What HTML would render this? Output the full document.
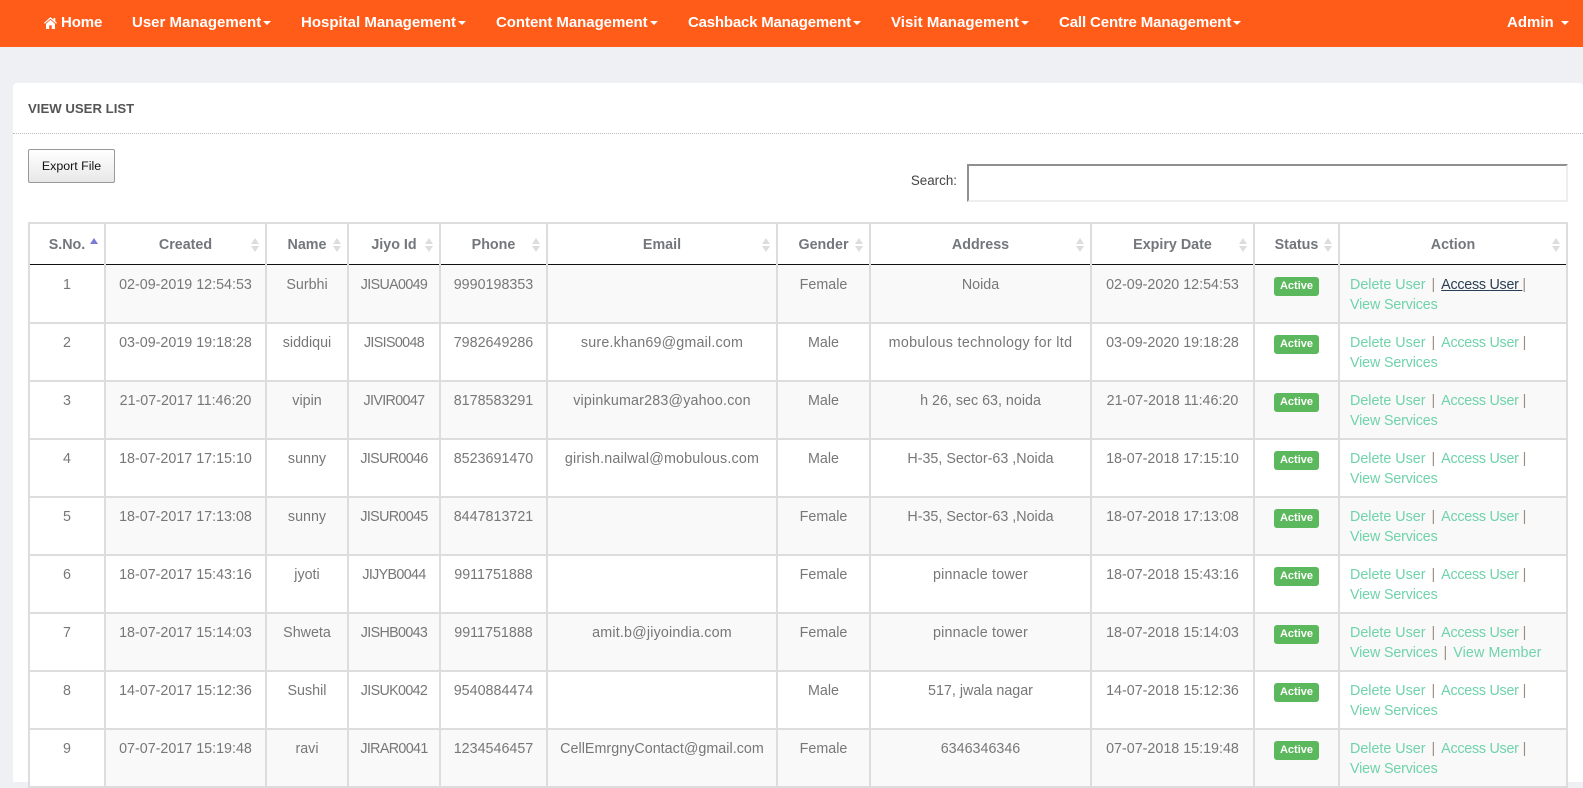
<!DOCTYPE html>
<html><head><meta charset="utf-8"><title>View User List</title>
<style>
*{box-sizing:border-box}
html,body{margin:0;padding:0;width:1583px;height:782px;overflow:hidden;background:#eef0f4;font-family:"Liberation Sans",sans-serif;font-size:14.3px;color:#777}
#nav{position:absolute;left:0;top:0;width:1583px;height:47px;background:#ff5b19}
#nav span{position:absolute;top:14px;line-height:18px;color:#fff;font-weight:bold;font-size:15px;white-space:nowrap}
#nav i{display:inline-block;width:0;height:0;border-left:4px solid transparent;border-right:4px solid transparent;border-top:4px solid #fff;vertical-align:2px;margin-left:2px}
#nav svg{position:absolute;left:44px;top:17px}
#panel{position:absolute;left:13px;top:83px;width:1570px;height:699px;background:#fff;border-radius:4px 4px 0 0}
#hd{position:absolute;left:15px;top:17px;font-weight:bold;font-size:13.2px;color:#555;line-height:18px;white-space:nowrap}
#dot{position:absolute;left:0;top:50px;width:1570px;border-top:1px dotted #bbb}
#btn{position:absolute;left:15px;top:66px;width:87px;height:34px;border:1px solid #999;border-radius:2px;background:linear-gradient(#fff,#e8e8e8);color:#111;font-size:12.4px;line-height:33px;text-align:center}
#sl{position:absolute;right:626px;top:89px;color:#444;font-size:13.4px;line-height:18px}
#si{position:absolute;left:954px;top:81px;width:601px;height:38px;border:2px solid;border-color:#8f8f8f #eee #eee #8f8f8f;background:#fff}
table{position:absolute;left:15px;top:139px;width:1538px;border-collapse:collapse;table-layout:fixed}
th,td{border:2px solid #ddd;text-align:center;vertical-align:top;white-space:nowrap}
th{height:41px;padding:12px 0 0;line-height:18px;font-weight:bold;color:#73777c;position:relative;border-bottom:1px solid #111}
td{height:58px;padding:9px 0 0;line-height:20px;color:#777}
tbody tr:first-child td{border-top:1px solid #111;height:59px;padding-top:10px}
tbody tr:nth-child(odd) td{background:#f9f9f9}
tbody tr:nth-child(odd) td:first-child{background:#fff}
td:nth-child(4){letter-spacing:-.65px}
td:nth-child(6){letter-spacing:.18px}
td:last-child{text-align:left;padding-left:10px;color:#a08c7c}
a{color:#6fd3ab;text-decoration:none}
a.d{margin-right:2px}
a.c{margin:0 0 0 2px;letter-spacing:-.25px}
a.v{letter-spacing:-.15px;margin-right:2px}
a.m{margin-left:2px;letter-spacing:.1px}
a.h{color:#2a3f54;text-decoration:underline}
b.bd{display:inline-block;width:45px;height:19px;margin-top:1px;background:#5cb85c;border-radius:3px;color:#fff;font-size:11px;line-height:19px;text-align:center}
th s{position:absolute;right:6px;top:14px;width:8px;height:14px;display:block}
th s:before,th s:after{content:"";position:absolute;left:0;width:0;height:0;border-left:4px solid transparent;border-right:4px solid transparent}
th s:before{top:0;border-bottom:6px solid #ddd}
th s:after{top:8px;border-top:6px solid #ddd}
th s.a:before{border-bottom-color:#7a7ad8}
th s.a:after{display:none}
</style></head><body>
<div id="nav">
<svg width="13" height="12" viewBox="0 0 13 12"><path fill="#fff" d="M6.5 0 9.5 2.7V1h1.8v3.3L13 5.9l-.8.9L6.5 1.7.8 6.8 0 5.9zM6.5 2.9 11 6.9V12H7.8V8.4H5.2V12H2V6.9z"/></svg>
<span style="left:61px;letter-spacing:-.1px">Home</span>
<span style="left:132px">User Management<i></i></span>
<span style="left:301px">Hospital Management<i></i></span>
<span style="left:496px;letter-spacing:-.05px">Content Management<i></i></span>
<span style="left:688px;letter-spacing:-.2px">Cashback Management<i></i></span>
<span style="left:891px;letter-spacing:.05px">Visit Management<i></i></span>
<span style="left:1059px;letter-spacing:-.13px">Call Centre Management<i></i></span>
<span style="left:1507px">Admin <i style="margin-left:3px"></i></span>
</div>
<div id="panel">
<div id="hd">VIEW USER LIST</div>
<div id="dot"></div>
<div id="btn">Export File</div>
<div id="sl">Search:</div>
<div id="si"></div>
<table>
<colgroup><col style="width:76px"><col style="width:161px"><col style="width:82px"><col style="width:92px"><col style="width:107px"><col style="width:230px"><col style="width:93px"><col style="width:221px"><col style="width:163px"><col style="width:85px"><col style="width:228px"></colgroup>
<thead><tr>
<th>S.No.<s class="a"></s></th><th>Created<s></s></th><th>Name<s></s></th><th>Jiyo Id<s></s></th><th>Phone<s></s></th><th>Email<s></s></th><th>Gender<s></s></th><th>Address<s></s></th><th>Expiry Date<s></s></th><th>Status<s></s></th><th>Action<s></s></th>
</tr></thead>
<tbody>
<tr><td>1</td><td>02-09-2019 12:54:53</td><td>Surbhi</td><td>JISUA0049</td><td>9990198353</td><td></td><td>Female</td><td>Noida</td><td>02-09-2020 12:54:53</td><td><b class="bd">Active</b></td><td><a class="d">Delete User</a> | <a class="c h">Access User </a> |<br><a class="v">View Services</a></td></tr>
<tr><td>2</td><td>03-09-2019 19:18:28</td><td>siddiqui</td><td>JISIS0048</td><td>7982649286</td><td>sure.khan69@gmail.com</td><td>Male</td><td style="letter-spacing:.33px">mobulous technology for ltd</td><td>03-09-2020 19:18:28</td><td><b class="bd">Active</b></td><td><a class="d">Delete User</a> | <a class="c">Access User</a> |<br><a class="v">View Services</a></td></tr>
<tr><td>3</td><td>21-07-2017 11:46:20</td><td>vipin</td><td>JIVIR0047</td><td>8178583291</td><td>vipinkumar283@yahoo.con</td><td>Male</td><td>h 26, sec 63, noida</td><td>21-07-2018 11:46:20</td><td><b class="bd">Active</b></td><td><a class="d">Delete User</a> | <a class="c">Access User</a> |<br><a class="v">View Services</a></td></tr>
<tr><td>4</td><td>18-07-2017 17:15:10</td><td>sunny</td><td>JISUR0046</td><td>8523691470</td><td>girish.nailwal@mobulous.com</td><td>Male</td><td>H-35, Sector-63 ,Noida</td><td>18-07-2018 17:15:10</td><td><b class="bd">Active</b></td><td><a class="d">Delete User</a> | <a class="c">Access User</a> |<br><a class="v">View Services</a></td></tr>
<tr><td>5</td><td>18-07-2017 17:13:08</td><td>sunny</td><td>JISUR0045</td><td>8447813721</td><td></td><td>Female</td><td>H-35, Sector-63 ,Noida</td><td>18-07-2018 17:13:08</td><td><b class="bd">Active</b></td><td><a class="d">Delete User</a> | <a class="c">Access User</a> |<br><a class="v">View Services</a></td></tr>
<tr><td>6</td><td>18-07-2017 15:43:16</td><td>jyoti</td><td>JIJYB0044</td><td>9911751888</td><td></td><td>Female</td><td style="letter-spacing:.2px">pinnacle tower</td><td>18-07-2018 15:43:16</td><td><b class="bd">Active</b></td><td><a class="d">Delete User</a> | <a class="c">Access User</a> |<br><a class="v">View Services</a></td></tr>
<tr><td>7</td><td>18-07-2017 15:14:03</td><td>Shweta</td><td>JISHB0043</td><td>9911751888</td><td>amit.b@jiyoindia.com</td><td>Female</td><td style="letter-spacing:.2px">pinnacle tower</td><td>18-07-2018 15:14:03</td><td><b class="bd">Active</b></td><td><a class="d">Delete User</a> | <a class="c">Access User</a> |<br><a class="v">View Services</a> | <a class="m">View Member</a></td></tr>
<tr><td>8</td><td>14-07-2017 15:12:36</td><td>Sushil</td><td>JISUK0042</td><td>9540884474</td><td></td><td>Male</td><td>517, jwala nagar</td><td>14-07-2018 15:12:36</td><td><b class="bd">Active</b></td><td><a class="d">Delete User</a> | <a class="c">Access User</a> |<br><a class="v">View Services</a></td></tr>
<tr><td>9</td><td>07-07-2017 15:19:48</td><td>ravi</td><td>JIRAR0041</td><td>1234546457</td><td style="letter-spacing:.03px">CellEmrgnyContact@gmail.com</td><td>Female</td><td>6346346346</td><td>07-07-2018 15:19:48</td><td><b class="bd">Active</b></td><td><a class="d">Delete User</a> | <a class="c">Access User</a> |<br><a class="v">View Services</a></td></tr>
</tbody></table>
</div>
</body></html>
